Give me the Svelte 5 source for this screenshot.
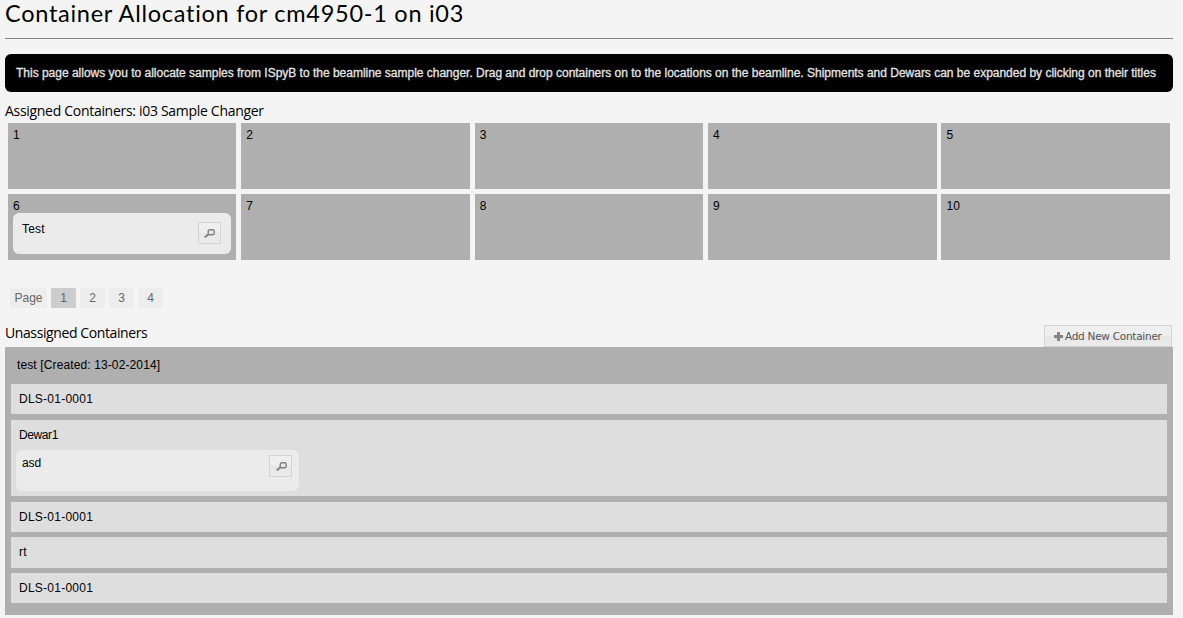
<script>
  const slots = Array.from({ length: 10 }, (_, i) => ({ id: i + 1, container: i === 5 ? 'Test' : null }));
  const pages = [1, 2, 3, 4];
  const dewars = [
    { name: 'DLS-01-0001', height: 30 },
    { name: 'Dewar1', height: 76, container: 'asd', narrow: true },
    { name: 'DLS-01-0001', height: 30 },
    { name: 'rt', height: 31 },
    { name: 'DLS-01-0001', height: 30 }
  ];
  let current = $state(1);
</script>

{#snippet view()}
  <button class="view" aria-label="View container">
    <svg width="11" height="9" viewBox="0 0 11 9">
      <rect x="4.2" y="0.7" width="6" height="5" rx="1.6" fill="#e9e9e9" stroke="#808080" stroke-width="1.4" />
      <path d="M4.6 5.3 0.7 8.3" fill="none" stroke="#808080" stroke-width="2" />
    </svg>
  </button>
{/snippet}

<main>
  <h1>Container Allocation for cm4950-1 on i03</h1>
  <p class="help">This page allows you to allocate samples from ISpyB to the beamline sample changer. Drag and drop containers on to the locations on the beamline. Shipments and Dewars can be expanded by clicking on their titles</p>
  <h2>Assigned Containers: i03 Sample Changer</h2>
  <div class="slots">
    {#each slots as slot}
      <div class="slot">
        <span>{slot.id}</span>
        {#if slot.container}
          <div class="card"><span>{slot.container}</span>{@render view()}</div>
        {/if}
      </div>
    {/each}
  </div>
  <nav>
    <span class="label">Page</span>
    {#each pages as page}
      <button class:active={page === current} onclick={() => (current = page)}>{page}</button>
    {/each}
  </nav>
  <div class="heading">
    <h2 class="un">Unassigned Containers</h2>
    <button class="add">
      <svg width="9" height="9" viewBox="0 0 9 9"><path d="M3 0h3v3h3v3H6v3H3V6H0V3h3z" fill="#858585" /></svg>
      <span>Add New Container</span>
    </button>
  </div>
  <section>
    <h3>test [Created: 13-02-2014]</h3>
    {#each dewars as dewar}
      <div class="dewar" class:narrow={dewar.narrow} style:height="{dewar.height}px">
        <span>{dewar.name}</span>
        {#if dewar.container}
          <div class="card wide"><span>{dewar.container}</span>{@render view()}</div>
        {/if}
      </div>
    {/each}
  </section>
</main>

<style>
  :global(body) { margin: 0; background: #f4f4f4; }
  main {
    box-sizing: border-box;
    width: 1183px;
    height: 618px;
    padding: 0 10px 0 5px;
    overflow: hidden;
    color: #000;
    background: #f4f4f4;
    font: 12px/14px "Liberation Sans", Arial, sans-serif;
  }
  h1, h2, h3, p { margin: 0; font-weight: 400; }
  button { font-family: inherit; margin: 0; }
  h1 {
    height: 38px;
    border-bottom: 1px solid #858585;
    font: 400 23.5px/27px Lato, sans-serif;
    letter-spacing: 0.73px;
    white-space: nowrap;
  }
  .help {
    box-sizing: border-box;
    height: 38px;
    margin-top: 15px;
    padding: 12px 11px;
    border-radius: 6px;
    background: #000;
    color: #e5e5e5;
    letter-spacing: -0.01px;
    -webkit-text-stroke: 0.3px #e5e5e5;
    white-space: nowrap;
  }
  h2 {
    font: 400 14px/20px "Open Sans", sans-serif;
    letter-spacing: -0.3px;
    white-space: nowrap;
  }
  main > h2 { height: 22px; margin-top: 9px; }
  .slots {
    display: grid;
    grid-template-columns: repeat(5, 1fr);
    grid-auto-rows: 66px;
    gap: 5px 4.85px;
    padding: 0 3.1px 0 2.9px;
  }
  .slot { box-sizing: border-box; padding: 5px 5.4px 5px 5.1px; background: #afafaf; }
  .slot > span { display: block; height: 14px; letter-spacing: 0.2px; }
  .card {
    box-sizing: border-box;
    display: flex;
    justify-content: space-between;
    height: 41px;
    padding: 9px 10px 0 9px;
    border-radius: 6px;
    background: #ebebeb;
  }
  .slot .card > span { letter-spacing: 0.2px; }
  .view {
    box-sizing: border-box;
    display: flex;
    align-items: flex-start;
    width: 23px;
    height: 22px;
    padding: 6px 0 0 5px;
    border: 1px solid #d3d3d3;
    background: linear-gradient(#efefef 0 50%, #e6e6e6 50%, #ececec);
  }
  .wide .view { padding-left: 6px; }
  .view svg { flex: none; display: block; }
  nav { display: flex; gap: 4px; margin: 28px 0 0 5px; height: 20px; color: #666; }
  nav .label, nav button {
    box-sizing: border-box;
    width: 25px;
    padding: 0;
    border: 0;
    background: #ededed;
    color: #666;
    font-size: 12px;
    line-height: 20px;
    text-align: center;
  }
  nav .label { width: 37px; }
  nav .active { background: #ccc; }
  .heading { display: flex; justify-content: space-between; height: 22px; margin: 17px 1px 0 0; }
  .un { margin-top: -2px; letter-spacing: -0.4px; }
  .add {
    box-sizing: border-box;
    display: flex;
    align-items: center;
    gap: 2px;
    width: 128px;
    height: 22px;
    padding: 0 0 0 9px;
    border: 1px solid #d3d3d3;
    background: linear-gradient(#efefef 0 50%, #e6e6e6 50%, #ececec);
    color: #555;
    font: 10.5px/20px "DejaVu Sans", Verdana, sans-serif;
    letter-spacing: -0.27px;
    white-space: nowrap;
  }
  .add svg { flex: none; }
  section { box-sizing: border-box; height: 268px; padding: 0 6px; background: #afafaf; }
  h3 { height: 26px; padding: 11px 0 0 6px; font: inherit; letter-spacing: 0.12px; }
  .dewar { box-sizing: border-box; margin-bottom: 6px; padding: 8px 5px 0; background: #dedede; }
  .dewar:nth-of-type(3), .dewar:nth-of-type(4) { margin-bottom: 5px; }
  .dewar > span { display: block; height: 22px; padding-left: 3px; letter-spacing: 0.25px; }
  .dewar.narrow > span { letter-spacing: -0.4px; }
  .wide { width: 283px; padding: 5px 7px 0 6px; }
  .wide > span { margin-top: 1px; letter-spacing: -0.1px; }
</style>
